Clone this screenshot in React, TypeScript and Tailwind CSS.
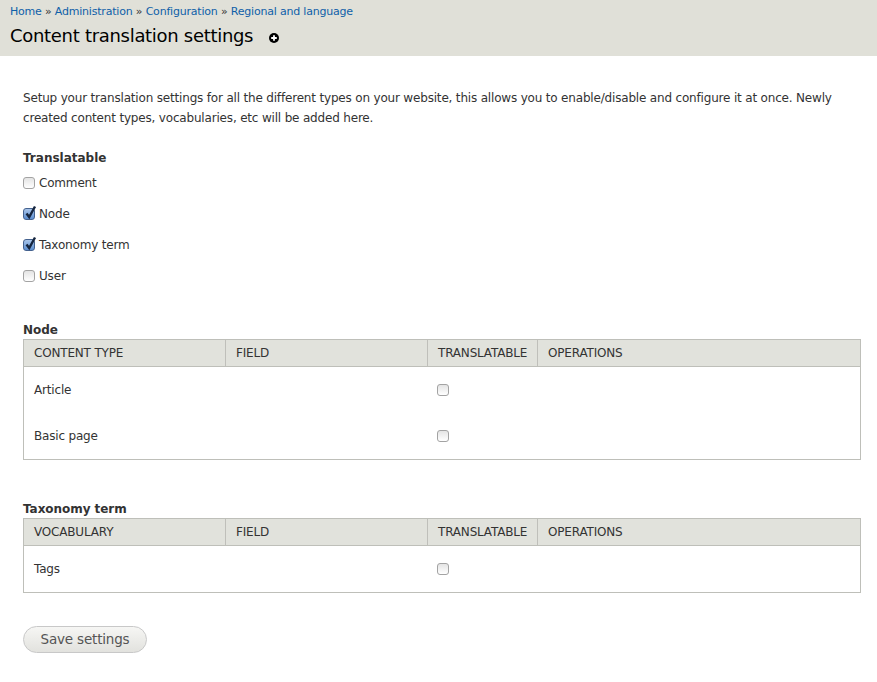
function Box({ checked = false }: { checked?: boolean }) {
  return (
    <span className="relative block h-[12px] w-[12px] rounded-[3px] border border-[#a3a3a3] bg-gradient-to-b from-[#e4e4e4] to-[#ffffff] data-[on=true]:border-[#44628f] data-[on=true]:from-[#a9c5ea] data-[on=true]:to-[#5c8ed0]" data-on={checked}>
      {checked && (
        <svg className="absolute left-[0px] top-[-4px]" width="13" height="15" viewBox="0 0 13 15">
          <path d="M2.5 8.5 L5.2 12 L11 1.5" fill="none" stroke="#16263f" strokeWidth="2.4" />
        </svg>
      )}
    </span>
  );
}

function CheckRow({ label, checked = false }: { label: string; checked?: boolean }) {
  return (
    <div className="flex h-[31px] items-center gap-[4px]">
      <Box checked={checked} />
      <span>{label}</span>
    </div>
  );
}

function Crumb({ children }: { children: string }) {
  return <a className="text-[#0f5fa8]">{children}</a>;
}

const headCell = 'border-l border-[#bfbfba] pl-[10px] first:border-l-0 flex items-center';

function SettingsTable({ title, firstColumn, rows }: { title: string; firstColumn: string; rows: string[] }) {
  return (
    <section>
      <h3 className="h-[17px] text-[12px] leading-[17px] font-bold tracking-[-0.05px] text-[#333]">{title}</h3>
      <div className="border border-[#bebfb9]">
        <div className="grid h-[27px] grid-cols-[201px_202px_110px_1fr] border-b border-[#bebfb9] bg-[#e1e2dc]">
          <div className={headCell}>{firstColumn}</div>
          <div className={headCell}>FIELD</div>
          <div className={headCell}>TRANSLATABLE</div>
          <div className={headCell}>OPERATIONS</div>
        </div>
        <div>
          {rows.map((row) => (
            <div key={row} className="grid h-[46px] grid-cols-[201px_202px_110px_1fr] items-center">
              <div className="pl-[10px]">{row}</div>
              <div />
              <div className="pl-[10px]">
                <Box />
              </div>
              <div />
            </div>
          ))}
        </div>
      </div>
    </section>
  );
}

export default function App() {
  return (
    <div className="min-h-[682px] bg-white font-['DejaVu_Sans',sans-serif] text-[12px] tracking-[-0.18px] text-[#333]">
      <header className="h-[56px] bg-[#e0e0d8] pl-[10px] pt-[4px]">
        <nav className="h-[15px] text-[11px] leading-[15px] tracking-[-0.2px]">
          <Crumb>Home</Crumb> » <Crumb>Administration</Crumb> » <Crumb>Configuration</Crumb> » <Crumb>Regional and language</Crumb>
        </nav>
        <div className="mt-[5px] flex h-[24px] items-center">
          <h1 className="text-[18px] leading-[24px] font-normal tracking-[-0.3px] text-black">Content translation settings</h1>
          <svg className="ml-[16px] mt-[3px]" width="10" height="10" viewBox="0 0 10 10">
            <circle cx="5" cy="5" r="5" fill="#000" />
            <path d="M5 2.2v5.6M2.2 5h5.6" stroke="#fff" strokeWidth="1.8" />
          </svg>
        </div>
      </header>

      <main className="pl-[23px] pr-[16px]">
        <p className="mt-[32px] w-[830px] leading-[20px]">
          Setup your translation settings for all the different types on your website, this allows you to enable/disable and configure it at once. Newly created content types, vocabularies, etc will be added here.
        </p>

        <h2 className="mt-[22px] h-[17px] leading-[17px] font-bold tracking-[0px]">Translatable</h2>
        <div>
          <CheckRow label="Comment" />
          <CheckRow label="Node" checked />
          <CheckRow label="Taxonomy term" checked />
          <CheckRow label="User" />
        </div>

        <div className="mt-[31px]">
          <SettingsTable title="Node" firstColumn="CONTENT TYPE" rows={['Article', 'Basic page']} />
        </div>
        <div className="mt-[41px]">
          <SettingsTable title="Taxonomy term" firstColumn="VOCABULARY" rows={['Tags']} />
        </div>

        <button className="mt-[33px] flex h-[27px] w-[124px] items-center justify-center rounded-[14px] border border-[#c8c8c8] bg-gradient-to-b from-[#f6f6f4] to-[#e2e2de] text-[13.5px] text-[#555]">
          Save settings
        </button>
      </main>
    </div>
  );
}
